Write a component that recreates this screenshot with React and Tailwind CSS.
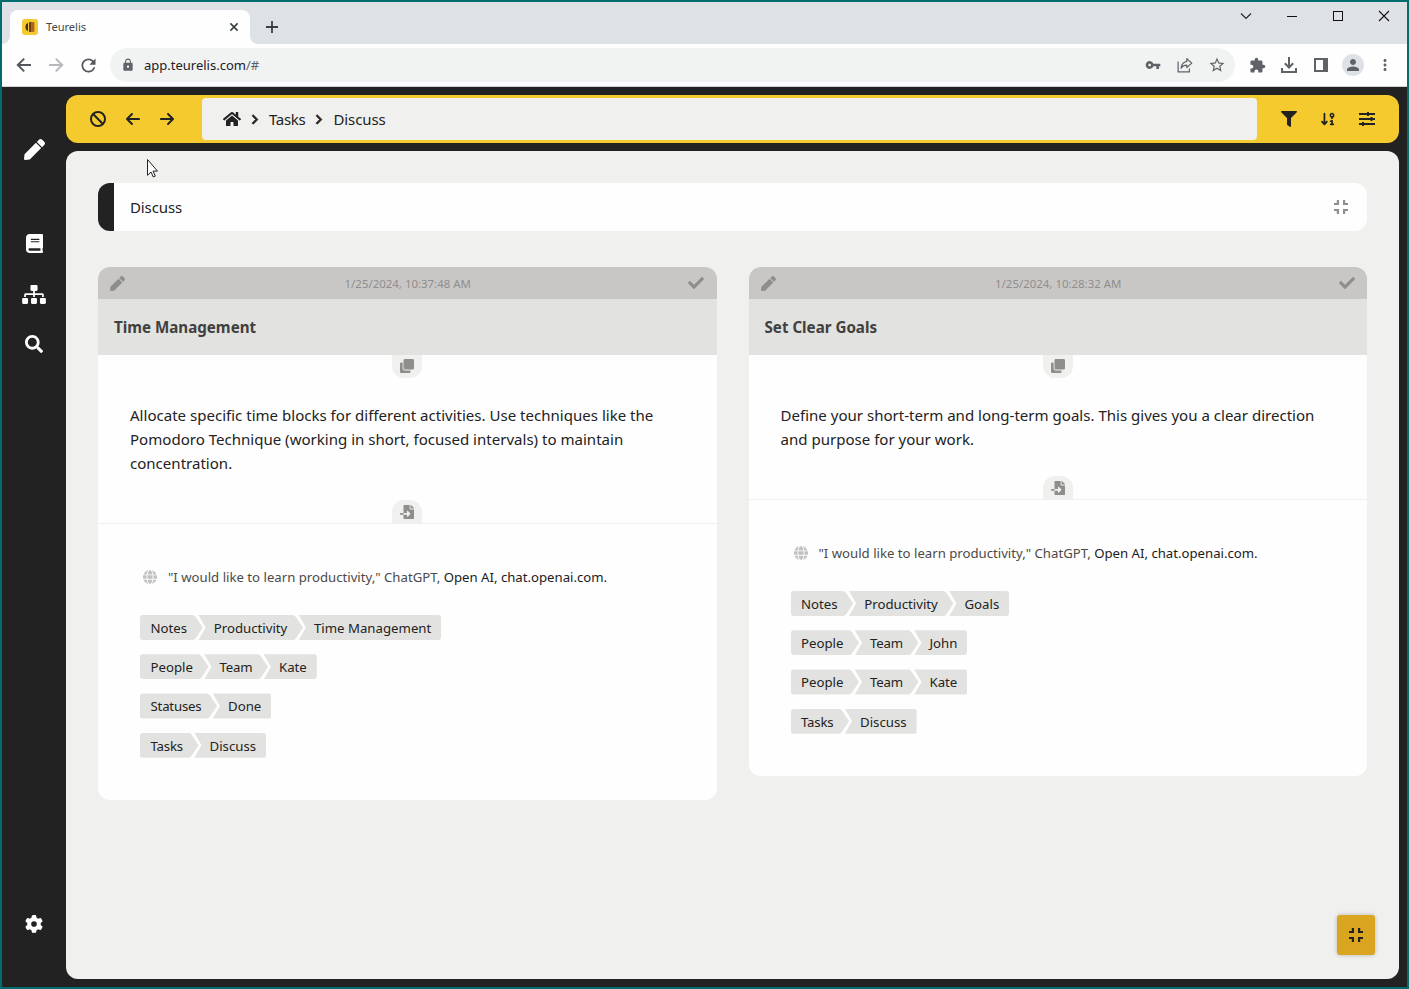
import React from "react";
import {
  FaArrowLeft,
  FaArrowRight,
  FaArrowDown91,
  FaBan,
  FaGear,
  FaGlobe,
} from "react-icons/fa6";
import {
  FaBook,
  FaCheck,
  FaChevronRight,
  FaClone,
  FaFileImport,
  FaFilter,
  FaHome,
  FaPen,
  FaSearch,
  FaSitemap,
} from "react-icons/fa";
import {
  MdExtension,
  MdLock,
  MdMoreVert,
  MdPerson,
  MdRefresh,
  MdStarBorder,
  MdVpnKey,
} from "react-icons/md";

function Favicon() {
  return (
    <svg width="16" height="16" viewBox="0 0 16 16">
      <rect width="16" height="16" rx="3" fill="#f4ca2e" />
      <path d="M6 4v8C4.200 11.500 3.500 10 3.500 8S4.200 4.500 6 4z" fill="#4a2a12" />
      <rect x="7" y="3" width="2.600" height="10" rx=".5" fill="#6b3a14" />
      <rect x="9.600" y="3" width="2.800" height="10" rx="1" fill="#a8651c" />
    </svg>
  );
}

function TabStrip() {
  return (
    <div className="flex h-[42px] shrink-0 items-end bg-[#dee1e6]">
      <svg width="8" height="34" viewBox="0 0 8 34" className="shrink-0">
        <path d="M0 34h8v-8a8 8 0 0 1-8 8z" fill="#fefefe" />
      </svg>
      <div className="flex h-[34px] w-[240px] items-center rounded-t-lg bg-[#fefefe] pr-[11px] pl-3">
        <Favicon />
        <span className="ml-2 text-[11.100px] text-[#45484c]">Teurelis</span>
        <svg className="ml-auto" width="10" height="10" viewBox="0 0 10 10">
          <path d="M1.400 1.400l7.200 7.200M8.600 1.400L1.400 8.600" stroke="#3c4043" strokeWidth="1.600" />
        </svg>
      </div>
      <svg width="8" height="34" viewBox="0 0 8 34" className="shrink-0">
        <path d="M8 34H0v-8a8 8 0 0 0 8 8z" fill="#fefefe" />
      </svg>
      <svg className="mb-[11px] ml-2" width="12" height="12" viewBox="0 0 12 12">
        <path d="M6 0v12M0 6h12" stroke="#3c4043" strokeWidth="1.800" />
      </svg>
      <div className="mr-[17px] mb-[22px] ml-auto flex items-center">
        <svg width="12" height="12" viewBox="0 0 12 12">
          <path d="M1 3.500l5 5 5-5" fill="none" stroke="#222" strokeWidth="1.100" />
        </svg>
        <svg className="ml-[35px]" width="11" height="12" viewBox="0 0 11 12">
          <path d="M0 6.500h10" stroke="#111" />
        </svg>
        <svg className="ml-[35px]" width="11" height="12" viewBox="0 0 11 12">
          <rect x=".5" y="1.500" width="9" height="9" fill="none" stroke="#111" />
        </svg>
        <svg className="ml-[34px]" width="12" height="12" viewBox="0 0 12 12">
          <path d="M1 1l10 10M11 1L1 11" stroke="#111" strokeWidth="1.100" />
        </svg>
      </div>
    </div>
  );
}

function NavArrow({ className }) {
  return (
    <svg className={className} width="20" height="20" viewBox="0 0 20 20" fill="none" stroke="currentColor" strokeWidth="2">
      <path d="M17 10H4.500M10.200 3.600L3.800 10l6.400 6.400" />
    </svg>
  );
}

function AddressBar() {
  return (
    <div className="flex h-[43px] shrink-0 items-center border-b border-[#cfd1d4] bg-[#fefefe] pl-3 text-[#5f6368]">
      <NavArrow className="text-[#54575c]" />
      <NavArrow className="ml-3 rotate-180 text-[#b7b9bc]" />
      <MdRefresh size={21} className="ml-3 text-[#54575c]" />
      <div className="ml-[11px] flex h-[34px] w-[1125px] items-center rounded-full bg-[#f1f3f3] pr-[9px] pl-[11px]">
        <MdLock size={14} />
        <span className="ml-[9px] pt-px text-[13px] text-[#202124]">
          app.teurelis.com<span className="text-[#5f6368]">/#</span>
        </span>
        <MdVpnKey size={16} className="ml-auto" />
        <svg className="ml-4" width="16" height="16" viewBox="0 0 16 16" fill="none" stroke="#5f6368" strokeWidth="1.200">
          <path d="M1.100 4.500v10.400h11.300v-3.500" />
          <path d="M9.800 1.700l5 4.400-5 4.400V8.200C7 8.200 5.200 9.200 4 11.200c.3-3.600 2.300-6.200 5.800-6.900z" strokeLinejoin="round" />
        </svg>
        <MdStarBorder size={18} className="ml-[15px]" />
      </div>
      <MdExtension size={17} className="ml-[14px]" />
      <svg className="ml-[14px]" width="18" height="18" viewBox="0 0 18 18" fill="none" stroke="#5f6368" strokeWidth="2">
        <path d="M9 1v10M4.800 7.300L9 11.500l4.200-4.200M2 12v4h14v-4" />
      </svg>
      <svg className="ml-[15px]" width="16" height="16" viewBox="0 0 16 16">
        <rect x="2" y="2" width="12" height="12" fill="none" stroke="#5f6368" strokeWidth="2" />
        <rect x="10" y="2" width="5" height="12" fill="#5f6368" />
      </svg>
      <div className="ml-[13px] flex size-[22px] items-center justify-center rounded-full bg-[#dee1e6]">
        <MdPerson size={18} />
      </div>
      <MdMoreVert size={18} className="ml-[12px]" />
    </div>
  );
}

function Sidebar() {
  return (
    <nav className="flex w-16 shrink-0 flex-col items-center pt-[52px] pb-[54px] text-[#fefefe]">
      <FaPen size={21} />
      <FaBook className="mt-[74px] h-[19px] w-[17px]" preserveAspectRatio="none" />
      <FaSitemap className="mt-8 h-[19px] w-6" />
      <FaSearch size={18} className="mt-[31px]" />
      <FaGear size={18} className="mt-auto" />
    </nav>
  );
}

function TuneIcon() {
  return (
    <svg width="16" height="14" viewBox="0 0 16 14" fill="#222">
      <path d="M0 1h16v2H0zM0 6h16v2H0zM0 11h16v2H0z" />
      <path d="M8 0h2v4H8zM11.500 5h2v4h-2zM3 10h2v4H3z" />
    </svg>
  );
}

function CollapseIcon({ className }) {
  return (
    <svg className={className} width="14" height="14" viewBox="0 0 14 14" fill="currentColor">
      <path d="M2.800 0H5v5H0V2.900h2.800zM9 0h2.200v2.900H14V5H9zM0 9h5v5H2.800v-2.900H0zM9 9h5v2.100h-2.800V14H9z" />
    </svg>
  );
}

function Toolbar() {
  return (
    <header className="flex h-12 shrink-0 items-center rounded-xl bg-[#f4ca2e] pl-6 text-[#222]">
      <FaBan size={16} />
      <FaArrowLeft size={16} className="ml-[19px]" />
      <FaArrowRight size={16} className="ml-[18px]" />
      <div className="ml-[27px] flex h-[42px] w-[1055px] items-center rounded bg-[#f0f0ee] pl-[21px] text-[15px]">
        <FaHome size={18} />
        <FaChevronRight className="ml-[10px] h-[11px] w-[8px]" stroke="currentColor" strokeWidth="30" />
        <span className="ml-[10px] w-9 whitespace-nowrap tracking-[-0.3px]">Tasks</span>
        <FaChevronRight className="ml-[10px] h-[11px] w-[8px]" stroke="currentColor" strokeWidth="30" />
        <span className="ml-[10.500px] tracking-[-0.100px]">Discuss</span>
      </div>
      <FaFilter size={16} className="ml-6" />
      <FaArrowDown91 size={16} className="ml-[23px]" />
      <span className="ml-[23px]">
        <TuneIcon />
      </span>
    </header>
  );
}

const TIGHT_WORDS = ["Tasks", "Team", "Statuses"];

function PathTag({ parts }) {
  return (
    <div className="flex h-[25.200px] text-[13.220px] leading-[26.600px] text-[#222]">
      {parts.map((part, i) => {
        const first = i === 0;
        const last = i === parts.length - 1;
        const shape = first
          ? "rounded-l-[3px] pl-[10.500px] pr-[15.600px] [clip-path:polygon(0_0,calc(100%-9.500px)_0,calc(100%-7px)_2px,100%_50%,calc(100%-7px)_calc(100%-2px),calc(100%-9.500px)_100%,0_100%)]"
          : last
            ? "-ml-[4.300px] rounded-r-[3px] pl-[15.300px] pr-[10px] [clip-path:polygon(0_0,100%_0,100%_100%,0_100%,7.300px_50%)]"
            : "-ml-[4.300px] pl-[15.300px] pr-[15.600px] [clip-path:polygon(0_0,calc(100%-9.500px)_0,calc(100%-7px)_2px,100%_50%,calc(100%-7px)_calc(100%-2px),calc(100%-9.500px)_100%,0_100%,7.300px_50%)]";
        const tracking = TIGHT_WORDS.includes(part) ? "tracking-[-0.200px]" : "";
        return (
          <span key={part} className={`bg-[#e2e2e0] whitespace-nowrap ${shape} ${tracking}`}>
            {part}
          </span>
        );
      })}
    </div>
  );
}

function Card({ date, title, lines, tags }) {
  return (
    <article className="flex-1 overflow-hidden rounded-xl bg-[#fefefe]">
      <div className="flex h-8 items-center justify-between bg-[#c9c7c6] px-3 text-[#8e8e8d]">
        <FaPen size={15} />
        <span className="pt-px pl-[2px] text-[11.450px]">{date}</span>
        <FaCheck size={16} />
      </div>
      <h2 className="flex h-14 items-center bg-[#e2e2e0] px-4 pt-px text-[15.150px] font-bold text-[#40403e]">
        {title}
      </h2>
      <div className="flex flex-col items-center border-b border-[#efefed] text-[#8e8e8d]">
        <div className="flex h-[23px] w-[30px] items-center justify-center rounded-b-[12px] bg-[#f0f0ee] pb-[2px]">
          <FaClone size={14} />
        </div>
        <p className="my-[25px] w-full px-8 text-[15.050px] leading-6 whitespace-nowrap text-[#222]">
          {lines.map((line) => (
            <span key={line} className="block">
              {line}
            </span>
          ))}
        </p>
        <div className="flex h-[23px] w-[30px] items-center justify-center rounded-t-[12px] bg-[#f0f0ee]">
          <FaFileImport size={14} />
        </div>
      </div>
      <div className="px-[42px] pt-[43px] pb-[42px]">
        <div className="flex h-5 items-center pl-[3px] text-[13.180px] whitespace-pre text-[#4a4a48]">
          <FaGlobe size={14} className="mr-[11px] text-[#c0c2c0]" />
          <span className="pt-[2px]">
            "I would like to learn productivity," ChatGPT, <span className="text-[#1b1b1b]">Open AI, chat.openai.com.</span>
          </span>
        </div>
        <div className="mt-7 flex flex-col gap-[14px]">
          {tags.map((tag) => (
            <PathTag key={tag.join("/")} parts={tag} />
          ))}
        </div>
      </div>
    </article>
  );
}

function Pointer() {
  return (
    <svg className="absolute top-[156px] left-[143px]" width="13" height="20" viewBox="0 0 13 20">
      <path
        d="M2.500 1.500v15.800l3.500-3.300 2.300 5 2-.9-2.300-5h4.500z"
        fill="#fefefe"
        stroke="#222"
        strokeWidth="1"
      />
    </svg>
  );
}

export default function App() {
  return (
    <div className="relative flex h-[989px] w-[1409px] flex-col border-2 border-[#036c6c] bg-[#222] font-['Noto_Sans','Open_Sans',sans-serif]">
      <TabStrip />
      <AddressBar />
      <div className="flex min-h-0 flex-1">
        <Sidebar />
        <div className="flex flex-1 flex-col gap-2 pt-2 pr-2 pb-2">
          <Toolbar />
          <main className="relative flex-1 rounded-xl bg-[#f0f0ee] p-8">
            <div className="flex h-12 items-center justify-between overflow-hidden rounded-xl border-l-[16px] border-[#222] bg-[#fefefe] pr-[19px] pl-4 text-[15px] text-[#222]">
              <span className="tracking-[-0.100px]">Discuss</span>
              <CollapseIcon className="text-[#8e8e8d]" />
            </div>
            <div className="mt-9 flex items-start gap-8">
              <Card
                date="1/25/2024, 10:37:48 AM"
                title="Time Management"
                lines={[
                  "Allocate specific time blocks for different activities. Use techniques like the",
                  "Pomodoro Technique (working in short, focused intervals) to maintain",
                  "concentration.",
                ]}
                tags={[
                  ["Notes", "Productivity", "Time Management"],
                  ["People", "Team", "Kate"],
                  ["Statuses", "Done"],
                  ["Tasks", "Discuss"],
                ]}
              />
              <Card
                date="1/25/2024, 10:28:32 AM"
                title="Set Clear Goals"
                lines={[
                  "Define your short-term and long-term goals. This gives you a clear direction",
                  "and purpose for your work.",
                ]}
                tags={[
                  ["Notes", "Productivity", "Goals"],
                  ["People", "Team", "John"],
                  ["People", "Team", "Kate"],
                  ["Tasks", "Discuss"],
                ]}
              />
            </div>
            <button className="absolute right-6 bottom-6 flex h-10 w-[38px] items-center justify-center rounded-[3px] bg-[#daa520] text-[#222] shadow-[0_0_4px_rgba(0,0,0,0.25)]">
              <CollapseIcon />
            </button>
          </main>
        </div>
      </div>
      <Pointer />
    </div>
  );
}
